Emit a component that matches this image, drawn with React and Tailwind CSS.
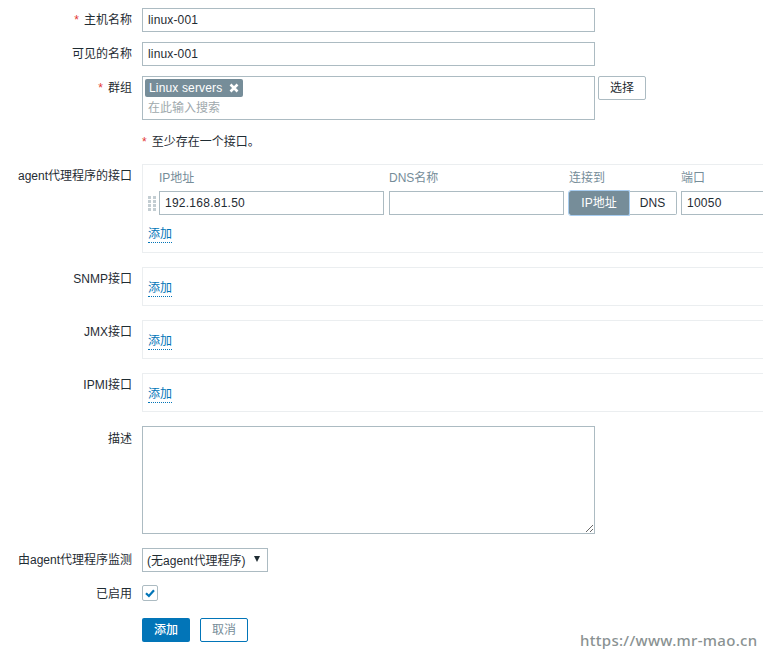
import React from "react";

const FONT = "font-['Liberation_Sans','Noto_Sans_CJK_SC',sans-serif]";

function Req() {
  return <span className="text-[#e33734] mr-[5px]">*</span>;
}

function Row({ label, required, className = "", labelClass = "", children }) {
  return (
    <div className={`flex shrink-0 ${className}`}>
      <div className={`w-[132px] shrink-0 text-right whitespace-nowrap ${labelClass}`}>
        {required && <Req />}
        {label}
      </div>
      <div className="ml-[10px] min-w-0 flex-1">{children}</div>
    </div>
  );
}

function TextBox({ value = "", className = "" }) {
  return (
    <div className={`h-6 border border-[#acbbc2] bg-white px-[5px] leading-[22px] text-[#1f2c33] ${className}`}>
      {value}
    </div>
  );
}

function AddLink() {
  return (
    <span className="inline-block h-[15px] border-b border-dotted border-[#0275b8] leading-[13px] text-[#0275b8]">
      添加
    </span>
  );
}

function EmptyInterface({ label }) {
  return (
    <Row label={label} className="mt-[14px]" labelClass="pt-[3px]">
      <div className="h-[39px] w-[640px] border-y border-l border-[#ebeef0] pl-[5px] pt-[11px]">
        <AddLink />
      </div>
    </Row>
  );
}

export default function App() {
  return (
    <div className={`relative flex h-[655px] w-[763px] flex-col overflow-hidden bg-white pt-2 text-[12px] text-[#1f2c33] ${FONT}`}>
      <Row label="主机名称" required labelClass="leading-[24px]">
        <TextBox value="linux-001" className="w-[453px] tracking-[0.15px]" />
      </Row>
      <Row label="可见的名称" className="mt-[10px]" labelClass="leading-[24px]">
        <TextBox value="linux-001" className="w-[453px] tracking-[0.15px]" />
      </Row>
      <Row label="群组" required className="mt-[10px]" labelClass="leading-[24px]">
        <div className="flex items-start">
          <div className="h-[44px] w-[453px] border border-[#acbbc2] px-[2px] pt-[2px]">
            <div className="flex h-[18px] w-[98px] items-center rounded-[2px] bg-[#768d99] pl-[4px] font-medium tracking-[0.15px] text-white">
              <span>Linux servers</span>
              <svg className="ml-[7px]" width="10" height="10" viewBox="0 0 10 10">
                <path d="M1.5 1.5 L8.5 8.5 M8.5 1.5 L1.5 8.5" stroke="#fff" strokeWidth="2.6" />
              </svg>
            </div>
            <div className="pl-[3px] pt-[2px] leading-[18px] text-[#a0a9ad]">在此输入搜索</div>
          </div>
          <div className="ml-[3px] h-6 w-[48px] rounded-[2px] border border-[#acbbc2] text-center leading-[22px]">选择</div>
        </div>
      </Row>
      <Row label="" className="mt-[10px]">
        <div className="h-6 leading-[24px]">
          <Req />至少存在一个接口。
        </div>
      </Row>
      <Row label="agent代理程序的接口" className="mt-[10px]" labelClass="pt-[3px]">
        <div className="h-[89px] w-[640px] border-y border-l border-[#ebeef0] pl-[5px]">
          <div className="flex pl-[11px] pt-[6px] leading-[15px] text-[#768d99]">
            <div className="w-[230px]">IP地址</div>
            <div className="w-[180px]">DNS名称</div>
            <div className="w-[112px]">连接到</div>
            <div>端口</div>
          </div>
          <div className="mt-[5px] flex items-center">
            <div className="mr-[3px] grid w-[8px] grid-cols-2 gap-x-[2px] gap-y-[1px]">
              {[0, 1, 2, 3, 4, 5, 6, 7].map((i) => (
                <span key={i} className="h-[3px] w-[3px] bg-[#c3cdd2]" />
              ))}
            </div>
            <TextBox value="192.168.81.50" className="w-[225px] tracking-[0.25px]" />
            <TextBox className="ml-[5px] w-[175px]" />
            <div className="ml-[5px] flex h-6 w-[108px]">
              <div className="relative z-10 h-6 w-[60px] rounded-l-[2px] border border-[#768d99] bg-[#768d99] text-center leading-[22px] text-white outline outline-[#a8cdf0]">
                IP地址
              </div>
              <div className="h-6 w-[48px] rounded-r-[2px] border border-l-0 border-[#acbbc2] text-center leading-[22px]">DNS</div>
            </div>
            <TextBox value="10050" className="ml-[4px] w-[100px] tracking-[0.25px]" />
          </div>
          <div className="mt-[10px]">
            <AddLink />
          </div>
        </div>
      </Row>
      <EmptyInterface label="SNMP接口" />
      <EmptyInterface label="JMX接口" />
      <EmptyInterface label="IPMI接口" />
      <Row label="描述" className="mt-[14px]" labelClass="pt-[4px]">
        <textarea readOnly className="block h-[108px] w-[453px] border border-[#acbbc2] bg-white" />
      </Row>
      <Row label="由agent代理程序监测" className="mt-[14px]" labelClass="leading-[24px]">
        <div className="flex h-6 w-[126px] items-center border border-[#acbbc2] pl-[4px] pt-[1px] leading-[22px]">
          <span className="whitespace-nowrap tracking-[0.05px]">(无agent代理程序)</span>
          <span className="ml-[8px] -mt-[3px] h-0 w-0 border-x-[3.5px] border-t-[6px] border-x-transparent border-t-[#1f2c33]" />
        </div>
      </Row>
      <Row label="已启用" className="mt-[13px]" labelClass="leading-[18px]">
        <div className="flex h-4 w-4 items-center justify-center rounded-[2px] border border-[#acbbc2]">
          <svg width="12" height="12" viewBox="0 0 12 12">
            <path d="M2 6.2 L4.9 9 L10 3.2" fill="none" stroke="#0275b8" strokeWidth="2.2" />
          </svg>
        </div>
      </Row>
      <Row label="" className="mt-[15px]">
        <div className="flex gap-[10px]">
          <div className="h-6 w-[48px] rounded-[2px] bg-[#0275b8] text-center leading-[24px] font-medium text-white">添加</div>
          <div className="h-6 w-[48px] rounded-[2px] border border-[#0275b8] text-center leading-[22px] text-[#768d99]">取消</div>
        </div>
      </Row>
      <div className="absolute left-[580px] top-[630px] whitespace-nowrap font-['Noto_Sans',sans-serif] text-[15px] font-medium leading-[20px] tracking-[0.3px] text-[#8a9292]">
        https://www.mr-mao.cn
      </div>
    </div>
  );
}
